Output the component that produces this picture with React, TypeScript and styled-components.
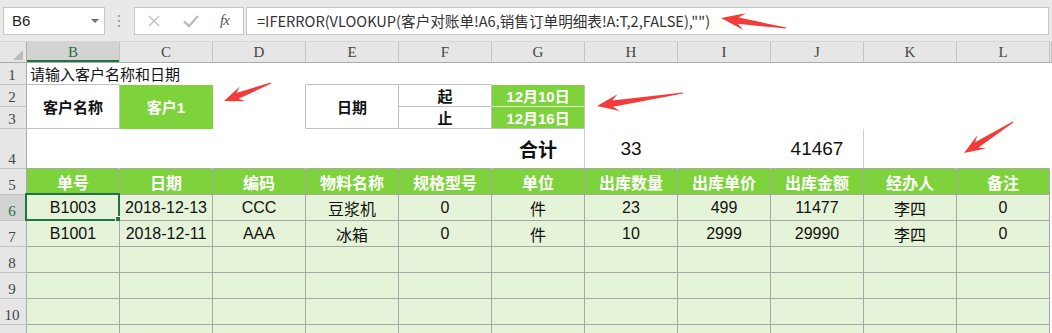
import React from "react";
import styled, { createGlobalStyle, css } from "styled-components";

const GREEN = "#7ed23c";
const LIGHT = "#e5f4d8";
const GRID = "#a8a8a8";
const BOX = "#c0c0c0";
const SEL = "#217346";
const HDR = "#e6e6e6";

const GlobalStyle = createGlobalStyle`
  html, body { margin: 0; padding: 0; background: #fff; }
  body {
    width: 1052px; height: 333px; overflow: hidden;
    font-family: "Liberation Sans", "Noto Sans CJK SC", sans-serif;
  }
`;

const Page = styled.div`
  position: relative;
  width: 1052px;
  height: 333px;
  overflow: hidden;
  background: #fff;
`;

/* ---------- formula bar ---------- */
const FormulaBar = styled.div`
  height: 42px;
  box-sizing: border-box;
  background: #e9e9e9;
  border-bottom: 1px solid #d6d6d6;
  display: flex;
  align-items: center;
  padding: 0 3px;
`;

const Field = styled.div`
  height: 28px;
  box-sizing: border-box;
  background: #fff;
  border: 1px solid #c6c6c6;
  display: flex;
  align-items: center;
`;

const NameBox = styled(Field)`
  width: 102px;
  justify-content: space-between;
  padding: 0 5px 0 8px;
  font-size: 15px;
  color: #222;
`;

const DropTriangle = styled.span`
  width: 0;
  height: 0;
  border-left: 4px solid transparent;
  border-right: 4px solid transparent;
  border-top: 4px solid #6f6f6f;
`;

const Dots = styled.div`
  margin: 0 14px 0 13px;
  display: flex;
  flex-direction: column;
  gap: 3px;
  & > span { width: 2px; height: 2px; background: #a5a5a5; }
`;

const FxBox = styled(Field)`
  width: 110px;
  justify-content: space-around;
  padding: 0 4px 0 2px;
`;

const FxLabel = styled.span`
  font-family: "Liberation Serif", serif;
  font-style: italic;
  font-size: 15px;
  color: #555;
  letter-spacing: -1px;
`;

const FormulaInput = styled(Field)`
  flex: 1;
  margin-left: 2px;
  padding-left: 10px;
  font-family: "Noto Sans CJK SC", sans-serif;
  font-size: 14.6px;
  color: #333;
  white-space: nowrap;
`;

/* ---------- sheet ---------- */
const Sheet = styled.div`
  display: grid;
  grid-template-columns: 27px repeat(11, 93px) 1fr;
  grid-template-rows: 21px 22px 22px 22px 40px repeat(7, 26px);
`;

type Place = {
  $c: number;
  $r: number;
  $cs?: number;
  $rs?: number;
  $br?: string;
  $bb?: string;
};

const GridCell = styled.div<Place>`
  grid-column: ${(p) => p.$c} / span ${(p) => p.$cs ?? 1};
  grid-row: ${(p) => p.$r} / span ${(p) => p.$rs ?? 1};
  box-sizing: border-box;
  border-right: 1px solid ${(p) => p.$br ?? "transparent"};
  border-bottom: 1px solid ${(p) => p.$bb ?? "transparent"};
  display: flex;
  align-items: center;
  justify-content: center;
  white-space: nowrap;
  min-width: 0;
`;

const Corner = styled(GridCell)`
  background: ${HDR};
  border-right-color: #ababab;
  border-bottom-color: #ababab;
  position: relative;
  &::after {
    content: "";
    position: absolute;
    right: 3px;
    bottom: 2px;
    width: 0;
    height: 0;
    border-left: 10px solid transparent;
    border-bottom: 10px solid #bcbcbc;
  }
`;

const ColHead = styled(GridCell)<{ $sel?: boolean }>`
  background: ${(p) => (p.$sel ? "#d3d3d3" : HDR)};
  border-right-color: #c4c4c4;
  border-bottom-color: #ababab;
  font-family: "Liberation Serif", serif;
  font-size: 15px;
  color: ${(p) => (p.$sel ? SEL : "#444")};
  ${(p) => p.$sel && css`box-shadow: inset 0 -2px 0 ${SEL};`}
`;

const RowHead = styled(GridCell)<{ $sel?: boolean }>`
  background: ${(p) => (p.$sel ? "#d3d3d3" : HDR)};
  border-right-color: #ababab;
  border-bottom-color: #c2c2c2;
  align-items: flex-end;
  padding: 0 2px 1px 0;
  font-family: "Liberation Serif", serif;
  font-size: 15px;
  line-height: 16px;
  color: ${(p) => (p.$sel ? SEL : "#444")};
`;

const NoteCell = styled(GridCell)`
  justify-content: flex-start;
  padding-left: 3px;
  overflow: visible;
  font-family: "Noto Sans CJK SC", sans-serif;
  font-size: 15px;
  color: #111;
`;

const LabelCell = styled(GridCell)`
  background: #fff;
  font-family: "Noto Sans CJK SC", sans-serif;
  font-weight: 700;
  font-size: 15px;
  color: #111;
`;

const ValueCell = styled(GridCell)`
  background: ${GREEN};
  color: #fff;
  font-family: "Liberation Sans", "Noto Sans CJK SC", sans-serif;
  font-weight: 700;
  font-size: 15px;
`;

const TotalCell = styled(GridCell)<{ $label?: boolean }>`
  font-size: 19px;
  font-weight: ${(p) => (p.$label ? 700 : 400)};
  font-family: ${(p) =>
    p.$label ? `"Noto Sans CJK SC", sans-serif` : `"Liberation Sans", sans-serif`};
  color: #111;
`;

const HeadCell = styled(GridCell)`
  background: ${GREEN};
  border-right-color: ${GRID};
  border-bottom-color: ${GRID};
  color: #fff;
  font-family: "Noto Sans CJK SC", sans-serif;
  font-weight: 700;
  font-size: 16px;
`;

const DataCell = styled(GridCell)`
  position: relative;
  background: ${LIGHT};
  border-right-color: ${GRID};
  border-bottom-color: ${GRID};
  color: #111;
  font-size: 16px;
`;

const Selection = styled.div`
  position: absolute;
  top: -2px;
  left: -2px;
  width: 95px;
  height: 28px;
  box-sizing: border-box;
  border: 2px solid ${SEL};
  pointer-events: none;
`;

const FillHandle = styled.div`
  position: absolute;
  right: -4px;
  bottom: -4px;
  width: 7px;
  height: 7px;
  box-sizing: border-box;
  background: ${SEL};
  border: 1px solid #fff;
`;

const Overlay = styled.svg`
  position: absolute;
  left: 0;
  top: 0;
  pointer-events: none;
`;

/* ---------- data ---------- */
const COLS = ["B", "C", "D", "E", "F", "G", "H", "I", "J", "K", "L"];
const HEADERS = ["单号", "日期", "编码", "物料名称", "规格型号", "单位", "出库数量", "出库单价", "出库金额", "经办人", "备注"];
const ROWS = [
  ["B1003", "2018-12-13", "CCC", "豆浆机", "0", "件", "23", "499", "11477", "李四", "0"],
  ["B1001", "2018-12-11", "AAA", "冰箱", "0", "件", "10", "2999", "29990", "李四", "0"],
  ["", "", "", "", "", "", "", "", "", "", ""],
  ["", "", "", "", "", "", "", "", "", "", ""],
  ["", "", "", "", "", "", "", "", "", "", ""],
  ["", "", "", "", "", "", "", "", "", "", ""],
];

type Arrow = { t: [number, number]; p: [number, number]; h: number; w: number };
const ARROWS: Arrow[] = [
  { t: [786, 28], p: [721, 18], h: 24, w: 8.5 },
  { t: [271, 83], p: [224, 101], h: 20, w: 8 },
  { t: [683, 93], p: [597, 106], h: 22, w: 8.5 },
  { t: [1013, 122], p: [964, 153], h: 21, w: 8 },
];

function arrowPoints(a: Arrow): string {
  const [tx, ty] = a.t;
  const [px, py] = a.p;
  const dx = px - tx;
  const dy = py - ty;
  const L = Math.hypot(dx, dy);
  const ux = dx / L;
  const uy = dy / L;
  const nx = -uy;
  const ny = ux;
  const neck = [px - ux * a.h * 0.72, py - uy * a.h * 0.72];
  const barb = [px - ux * a.h, py - uy * a.h];
  const s = 3.2;
  const t = 0.6;
  const pts = [
    [tx + nx * t, ty + ny * t],
    [neck[0] + nx * s, neck[1] + ny * s],
    [barb[0] + nx * a.w, barb[1] + ny * a.w],
    [px, py],
    [barb[0] - nx * a.w, barb[1] - ny * a.w],
    [neck[0] - nx * s, neck[1] - ny * s],
    [tx - nx * t, ty - ny * t],
  ];
  return pts.map((q) => `${q[0].toFixed(1)},${q[1].toFixed(1)}`).join(" ");
}

export default function App() {
  return (
    <Page>
      <GlobalStyle />
      <FormulaBar>
        <NameBox>
          <span>B6</span>
          <DropTriangle />
        </NameBox>
        <Dots>
          <span />
          <span />
          <span />
        </Dots>
        <FxBox>
          <svg width="14" height="14" viewBox="0 0 14 14">
            <path d="M2 2 L12 12 M12 2 L2 12" stroke="#bdbdbd" strokeWidth="1.3" fill="none" />
          </svg>
          <svg width="18" height="14" viewBox="0 0 18 14">
            <path d="M2 7.5 L7 12 L16 2" stroke="#bdbdbd" strokeWidth="2.4" fill="none" />
          </svg>
          <FxLabel>fx</FxLabel>
        </FxBox>
        <FormulaInput>=IFERROR(VLOOKUP(客户对账单!A6,销售订单明细表!A:T,2,FALSE),"")</FormulaInput>
      </FormulaBar>

      <Sheet>
        <Corner $c={1} $r={1} />
        {COLS.map((c, i) => (
          <ColHead key={c} $c={i + 2} $r={1} $sel={c === "B"}>
            {c}
          </ColHead>
        ))}
        <ColHead $c={13} $r={1} />
        {Array.from({ length: 11 }, (_, i) => (
          <RowHead key={i} $c={1} $r={i + 2} $sel={i + 1 === 6}>
            {i + 1 <= 10 ? i + 1 : ""}
          </RowHead>
        ))}

        {/* row 1 */}
        <NoteCell $c={2} $r={2} $bb={BOX}>请输入客户名称和日期</NoteCell>
        <GridCell $c={5} $r={2} $bb={BOX} />
        <GridCell $c={6} $r={2} $bb={BOX} />

        {/* rows 2-3 */}
        <LabelCell $c={2} $r={3} $rs={2} $br={BOX} $bb={BOX}>客户名称</LabelCell>
        <ValueCell $c={3} $r={3} $rs={2}>客户1</ValueCell>
        <GridCell $c={4} $r={3} $rs={2} $br={BOX} />
        <LabelCell $c={5} $r={3} $rs={2} $br={BOX} $bb={BOX}>日期</LabelCell>
        <LabelCell $c={6} $r={3} $br={BOX} $bb={BOX}>起</LabelCell>
        <LabelCell $c={6} $r={4} $br={BOX} $bb={BOX}>止</LabelCell>
        <ValueCell $c={7} $r={3} $br={BOX} $bb="#dff0cf">12月10日</ValueCell>
        <ValueCell $c={7} $r={4} $br={BOX} $bb={BOX}>12月16日</ValueCell>

        {/* row 4 */}
        {COLS.map((c, i) => {
          const col = i + 2;
          if (c === "G")
            return (
              <TotalCell key={c} $c={col} $r={5} $label $br="#d0d0d0" $bb={GRID}>
                合计
              </TotalCell>
            );
          if (c === "H")
            return (
              <TotalCell key={c} $c={col} $r={5} $bb={GRID}>
                33
              </TotalCell>
            );
          if (c === "J")
            return (
              <TotalCell key={c} $c={col} $r={5} $br="#d0d0d0" $bb={GRID}>
                41467
              </TotalCell>
            );
          return <GridCell key={c} $c={col} $r={5} $bb={GRID} />;
        })}

        {/* row 5 header */}
        {HEADERS.map((h, i) => (
          <HeadCell key={h} $c={i + 2} $r={6}>
            {h}
          </HeadCell>
        ))}

        {/* data rows */}
        {ROWS.map((row, ri) =>
          row.map((v, ci) => (
            <DataCell key={`${ri}-${ci}`} $c={ci + 2} $r={ri + 7}>
              {v}
              {ri === 0 && ci === 0 && (
                <Selection>
                  <FillHandle />
                </Selection>
              )}
            </DataCell>
          ))
        )}
      </Sheet>

      <Overlay width="1052" height="333" viewBox="0 0 1052 333">
        {ARROWS.map((a, i) => (
          <polygon key={i} points={arrowPoints(a)} fill="#f23b3b" />
        ))}
      </Overlay>
    </Page>
  );
}
